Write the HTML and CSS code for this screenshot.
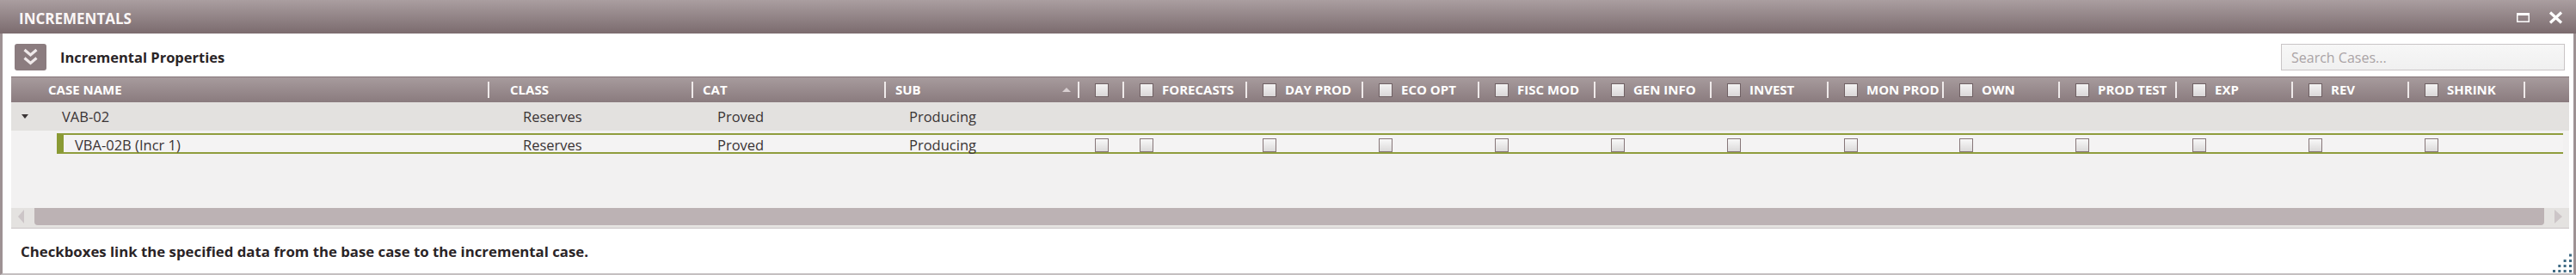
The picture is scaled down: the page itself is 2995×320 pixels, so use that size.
FILE: index.html
```html
<!DOCTYPE html>
<html>
<head>
<meta charset="utf-8">
<link rel="stylesheet" href="styles.css">
</head>
<body>
<div class="window">
  <div class="titlebar">
    <span class="title">INCREMENTALS</span>
    <div class="win-btns">
      <svg class="ico-max" width="15" height="11" viewBox="0 0 15 11"><rect x="0.75" y="0.75" width="13.5" height="9.5" fill="none" stroke="#fff" stroke-width="1.5"/><rect x="0" y="0" width="15" height="3" fill="#fff"/></svg>
      <svg class="ico-close" width="17" height="15" viewBox="0 0 17 15"><path d="M2 1.5 L15 13.5 M15 1.5 L2 13.5" stroke="#fff" stroke-width="3.2" fill="none"/></svg>
    </div>
  </div>
  <div class="content">
    <div class="toolbar">
      <div class="expand-btn">
        <svg width="37" height="31" viewBox="0 0 37 31"><polyline points="11.5,7 18.5,13 25.5,7" fill="none" stroke="#efe9ea" stroke-width="3.2"/><polyline points="11.5,16.5 18.5,22.5 25.5,16.5" fill="none" stroke="#efe9ea" stroke-width="3.2"/></svg>
      </div>
      <span class="section-title">Incremental Properties</span>
      <div class="search"><span class="placeholder">Search Cases...</span></div>
    </div>
    <div class="grid">
      <div class="header cols">
        <div class="hc c-case">CASE NAME</div>
        <div class="hc c-class">CLASS</div>
        <div class="hc c-cat">CAT</div>
        <div class="hc c-sub">SUB<span class="sort-up"></span></div>
        <div class="hc hcb"><span class="cb hdr"></span></div>
        <div class="hc hcb"><span class="cb hdr"></span>FORECASTS</div>
        <div class="hc hcb"><span class="cb hdr"></span>DAY PROD</div>
        <div class="hc hcb"><span class="cb hdr"></span>ECO OPT</div>
        <div class="hc hcb"><span class="cb hdr"></span>FISC MOD</div>
        <div class="hc hcb"><span class="cb hdr"></span>GEN INFO</div>
        <div class="hc hcb"><span class="cb hdr"></span>INVEST</div>
        <div class="hc hcb"><span class="cb hdr"></span>MON PROD</div>
        <div class="hc hcb"><span class="cb hdr"></span>OWN</div>
        <div class="hc hcb"><span class="cb hdr"></span>PROD TEST</div>
        <div class="hc hcb"><span class="cb hdr"></span>EXP</div>
        <div class="hc hcb"><span class="cb hdr"></span>REV</div>
        <div class="hc hcb"><span class="cb hdr"></span>SHRINK</div>
        <div class="hc last"></div>
      </div>
      <div class="row group cols">
        <div class="bc g-case"><span class="tri-down"></span>VAB-02</div>
        <div class="bc v-class">Reserves</div>
        <div class="bc v-cat">Proved</div>
        <div class="bc v-sub">Producing</div>
      </div>
      <div class="row child cols-child">
        <div class="bc ch-case">VBA-02B (Incr 1)</div>
        <div class="bc v-class">Reserves</div>
        <div class="bc v-cat">Proved</div>
        <div class="bc v-sub">Producing</div>
        <div class="bc bcb"><span class="cb"></span></div>
        <div class="bc bcb"><span class="cb"></span></div>
        <div class="bc bcb"><span class="cb"></span></div>
        <div class="bc bcb"><span class="cb"></span></div>
        <div class="bc bcb"><span class="cb"></span></div>
        <div class="bc bcb"><span class="cb"></span></div>
        <div class="bc bcb"><span class="cb"></span></div>
        <div class="bc bcb"><span class="cb"></span></div>
        <div class="bc bcb"><span class="cb"></span></div>
        <div class="bc bcb"><span class="cb"></span></div>
        <div class="bc bcb"><span class="cb"></span></div>
        <div class="bc bcb"><span class="cb"></span></div>
        <div class="bc bcb"><span class="cb"></span></div>
        <div class="bc"></div>
      </div>
      <div class="filler"></div>
      <div class="hscroll">
        <span class="arr-left"></span>
        <div class="thumb"></div>
        <span class="arr-right"></span>
      </div>
    </div>
    <div class="footer">
      <span class="note">Checkboxes link the specified data from the base case to the incremental case.</span>
      <svg class="grip" width="22" height="22" viewBox="0 0 22 22">
        <rect x="19" y="0.5" width="3" height="3" fill="#3f6b84"/>
        <rect x="12.6" y="7" width="3" height="3" fill="#3f6b84"/>
        <rect x="19" y="7" width="3" height="3" fill="#3f6b84"/>
        <rect x="6.3" y="13" width="3" height="3" fill="#3f6b84"/>
        <rect x="12.6" y="13" width="3" height="3" fill="#3f6b84"/>
        <rect x="19" y="13" width="3" height="3" fill="#3f6b84"/>
        <rect x="0" y="19" width="3" height="3" fill="#3f6b84"/>
        <rect x="6.3" y="19" width="3" height="3" fill="#3f6b84"/>
        <rect x="12.6" y="19" width="3" height="3" fill="#3f6b84"/>
        <rect x="19" y="19" width="3" height="3" fill="#3f6b84"/>
      </svg>
    </div>
  </div>
</div>
</body>
</html>
```
FILE: styles.css
```css
* { box-sizing: border-box; }
html, body { margin: 0; padding: 0; }
body {
  width: 2995px;
  height: 320px;
  overflow: hidden;
  background: #ffffff;
  font-family: "Open Sans", "Noto Sans", sans-serif;
}
.window {
  width: 2995px;
  height: 320px;
  display: flex;
  flex-direction: column;
}
.titlebar {
  height: 39px;
  flex: 0 0 39px;
  background: linear-gradient(#aa9ea0, #7b6b6e);
  display: flex;
  align-items: center;
  justify-content: space-between;
  padding: 0 15px 0 22px;
}
.title {
  color: #fbf7f7;
  font-weight: 700;
  font-size: 17px;
  line-height: 35px;
  padding-top: 4px;
}
.win-btns {
  display: flex;
  align-items: center;
  gap: 22px;
}
.ico-max { display: block; margin-top: 2px; }
.ico-close { display: block; margin-top: 2px; }
.content {
  flex: 1;
  display: flex;
  flex-direction: column;
  border-left: 3px solid #9e9294;
  border-right: 3px solid #9e9294;
  border-bottom: 2px solid #c4bfc0;
  padding: 0 5px 0 10px;
}
.toolbar {
  height: 50px;
  flex: 0 0 50px;
  display: flex;
  align-items: flex-start;
  padding-top: 12px;
}
.expand-btn {
  width: 37px;
  height: 31px;
  margin-left: 4px;
  background: #8b7c7f;
  border-radius: 3px;
}
.expand-btn svg { display: block; }
.section-title {
  margin-left: 16px;
  font-weight: 700;
  font-size: 16.5px;
  line-height: 31px;
  color: #2a2426;
}
.search {
  margin-left: auto;
  margin-right: 5px;
  width: 330px;
  height: 31px;
  border: 1px solid #c9c5c6;
  background: linear-gradient(#f7f7f7, #f0f0f0);
  padding-left: 11px;
  display: flex;
  align-items: center;
}
.placeholder {
  color: #aaa3a5;
  font-size: 16px;
}
.grid {
  height: 177px;
  flex: 0 0 177px;
  background: #f2f1f1;
  display: flex;
  flex-direction: column;
}
.cols {
  display: grid;
  grid-template-columns: 556px 237px 224px 225px 52px 143px 135px 135px 135px 135px 136px 134px 135px 136px 135px 135px 135px 1fr;
}
.cols-child {
  display: grid;
  grid-template-columns: 495px 237px 224px 225px 52px 143px 135px 135px 135px 135px 136px 134px 135px 136px 135px 135px 135px 1fr;
}
.header {
  height: 30px;
  flex: 0 0 30px;
  background: linear-gradient(#a79b9d, #8a7b7e);
  border-top: 1px solid #847578;
  align-items: center;
}
.hc {
  height: 19px;
  border-right: 2px solid #efeaea;
  display: flex;
  align-items: center;
  color: #ffffff;
  font-weight: 700;
  font-size: 15px;
  line-height: 19px;
  white-space: nowrap;
}
.hc.last { border-right: none; }
.c-case { padding-left: 43px; }
.c-class { padding-left: 24px; }
.c-cat { padding-left: 11px; }
.c-sub { padding-left: 11px; padding-right: 8px; justify-content: space-between; }
.sort-up {
  width: 0;
  height: 0;
  border-left: 5px solid transparent;
  border-right: 5px solid transparent;
  border-bottom: 5px solid #d8cfd1;
}
.hcb { padding-left: 18px; gap: 10px; }
.cb {
  display: block;
  flex: 0 0 16px;
  width: 16px;
  height: 16px;
  border: 1px solid #877779;
  background: linear-gradient(#f8f8f8, #dcdada);
}
.cb.hdr {
  border-color: #6f6063;
  background: linear-gradient(#f4f3f3, #dad7d8);
}
.row { align-items: center; }
.group {
  height: 33px;
  flex: 0 0 33px;
  background: #e3e1df;
}
.bc {
  display: flex;
  align-items: center;
  font-size: 16.5px;
  color: #3a3435;
  white-space: nowrap;
}
.g-case { padding-left: 12px; }
.tri-down {
  width: 0;
  height: 0;
  border-left: 4.5px solid transparent;
  border-right: 4.5px solid transparent;
  border-top: 5px solid #3a3435;
  margin-right: 39px;
}
.v-class { padding-left: 39px; }
.v-cat { padding-left: 28px; }
.v-sub { padding-left: 27px; }
.child {
  height: 24px;
  flex: 0 0 24px;
  margin: 3px 7px 0 53px;
  background: #f4f3f3;
  border-top: 2px solid #8f9d3d;
  border-bottom: 2px solid #8f9d3d;
  border-left: 8px solid #8a9a34;
}
.ch-case { padding-left: 13px; }
.bcb { padding-left: 18px; }
.filler { flex: 1; }
.hscroll {
  height: 24px;
  flex: 0 0 24px;
  background: #e4e2e0;
  border-bottom: 1px solid #c9c4c5;
  display: flex;
  align-items: flex-start;
}
.arr-left {
  margin-left: 8px;
  margin-top: 2px;
  width: 0;
  height: 0;
  border-top: 8px solid transparent;
  border-bottom: 8px solid transparent;
  border-right: 7px solid #ccc5c7;
}
.thumb {
  flex: 1;
  margin-left: 12px;
  height: 20px;
  background: #bcb2b4;
  border-radius: 0 0 4px 4px;
}
.arr-right {
  margin-left: 12px;
  margin-right: 8px;
  margin-top: 2px;
  width: 0;
  height: 0;
  border-top: 8px solid transparent;
  border-bottom: 8px solid transparent;
  border-left: 9px solid #ccc5c7;
}
.footer {
  flex: 1;
  display: flex;
  align-items: center;
  justify-content: space-between;
}
.note {
  margin-left: 11px;
  font-weight: 700;
  font-size: 16.8px;
  color: #2a2426;
}
.grip {
  display: block;
  align-self: flex-end;
  margin-right: -3px;
  margin-bottom: 1px;
}
```
